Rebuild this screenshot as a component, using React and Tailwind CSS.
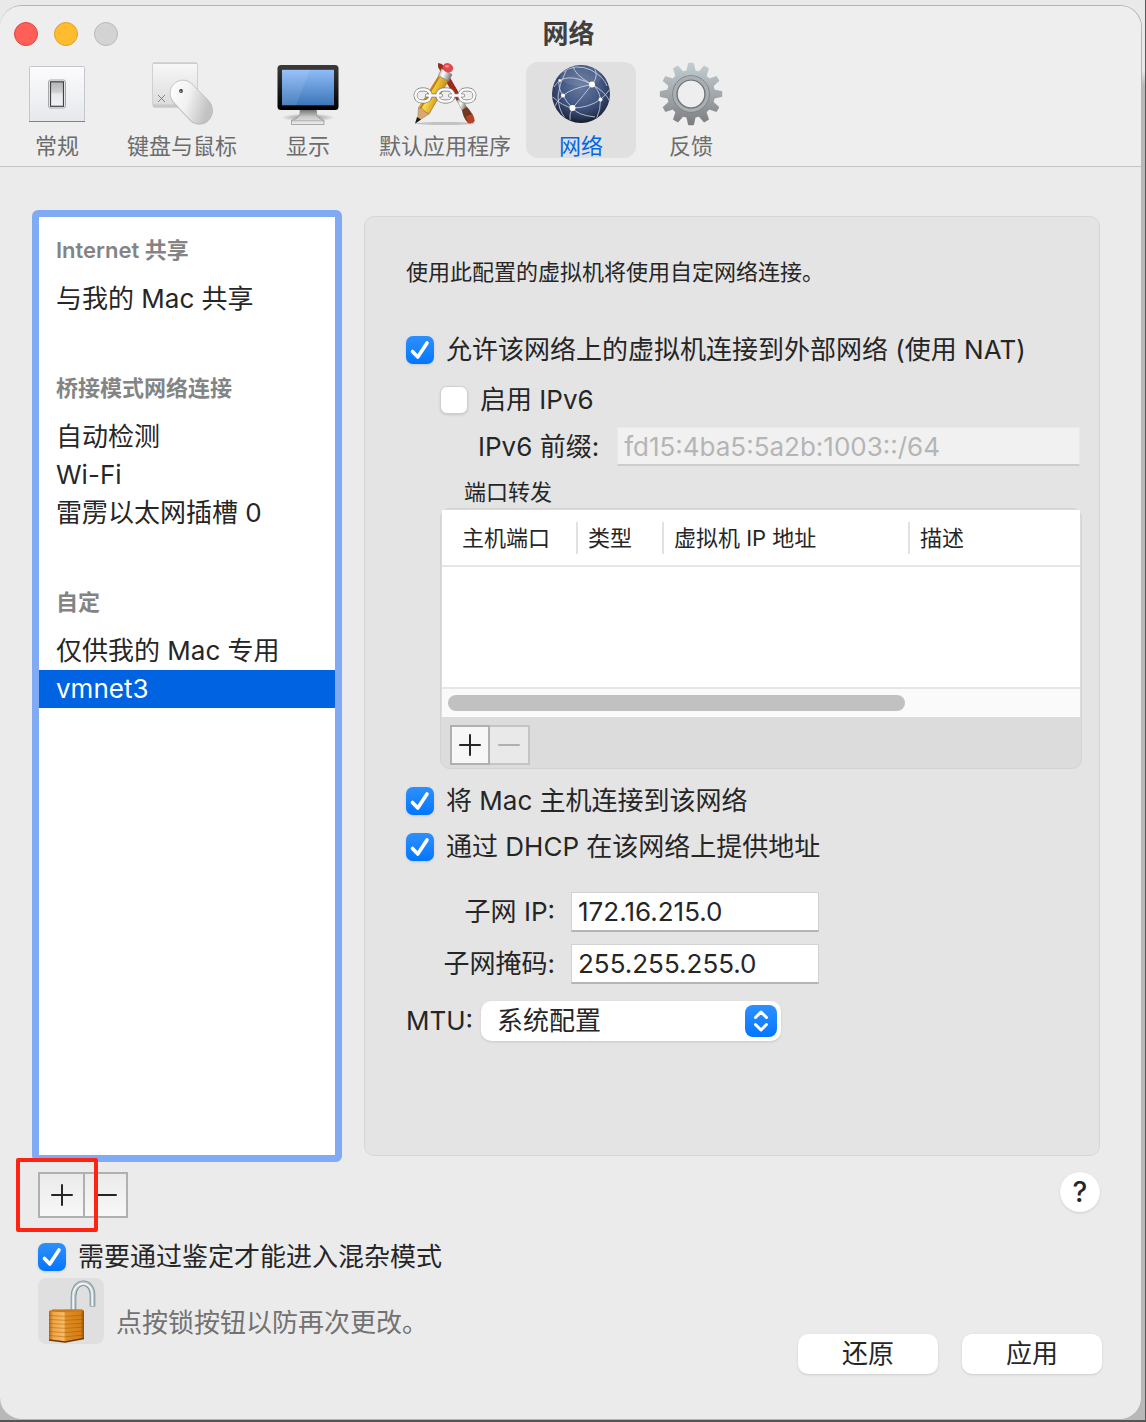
import React, { useState } from "react";

const general = (
  <svg viewBox="0 0 64 64" className="size-16" aria-hidden="true">
    <defs>
      <linearGradient id="plate" x1="0" y1="0" x2="0" y2="1">
        <stop offset="0" stopColor="#fcfcfd" />
        <stop offset="1" stopColor="#e6e8ec" />
      </linearGradient>
      <linearGradient id="rocker" x1="0" y1="0" x2="0" y2="1">
        <stop offset="0" stopColor="#b4b4b6" />
        <stop offset="0.42" stopColor="#cfcfd2" />
        <stop offset="0.5" stopColor="#e6e8ec" />
        <stop offset="1" stopColor="#f1f2f4" />
      </linearGradient>
    </defs>
    <rect x="4.500" y="4.500" width="55" height="55" rx="1" fill="url(#plate)" stroke="#c3c6cb" />
    <path d="M4 59.500h56" stroke="#7f8388" strokeWidth="1.200" />
    <rect x="23.500" y="18" width="17" height="28" rx="2" fill="#f7f7f8" stroke="#a5a7aa" />
    <rect x="25.500" y="19.800" width="13" height="24.500" fill="url(#rocker)" stroke="#3f4144" strokeWidth="1.200" />
  </svg>
);

const keyboardMouse = (
  <svg viewBox="0 0 64 64" className="size-16" aria-hidden="true">
    <defs>
      <linearGradient id="keycap" x1="0" y1="0" x2="0" y2="1">
        <stop offset="0" stopColor="#f8f8f8" />
        <stop offset="1" stopColor="#dcdcdc" />
      </linearGradient>
      <linearGradient id="mouse" x1="0" y1="0" x2="1" y2="0.300">
        <stop offset="0" stopColor="#ffffff" />
        <stop offset="0.500" stopColor="#f1f1f1" />
        <stop offset="1" stopColor="#c2c2c2" />
      </linearGradient>
    </defs>
    <rect x="2.500" y="0.800" width="45" height="45" rx="2" fill="#c9c9c9" />
    <rect x="2.500" y="0.800" width="45" height="42" rx="2" fill="url(#keycap)" stroke="#cbcbcb" strokeWidth="0.800" />
    <path d="M3 1.300h44" stroke="#bdbdbd" strokeWidth="0.800" />
    <path d="M8 33l7 7M15 33l-7 7" stroke="#777" strokeWidth="0.900" />
    <path d="M23.500 22.500C29 16.500 37 17 42 22L58 38C64 44 64 53 58 58.500C53 63 45 63 40 58L23.500 40C19 35 19 27 23.500 22.500Z" fill="#8e8e8e" opacity="0.350" transform="translate(0 1)" />
    <path d="M23.500 22.500C29 16.500 37 17 42 22L58 38C64 44 64 53 58 58.500C53 63 45 63 40 58L23.500 40C19 35 19 27 23.500 22.500Z" fill="url(#mouse)" stroke="#b5b5b5" strokeWidth="0.700" />
    <circle cx="31" cy="29" r="1.900" fill="#333" />
    <circle cx="30.800" cy="29.300" r="0.700" fill="#ddd" />
  </svg>
);

const display = (
  <svg viewBox="0 0 64 64" className="size-16" aria-hidden="true">
    <defs>
      <linearGradient id="screen" x1="0" y1="0" x2="0" y2="1">
        <stop offset="0" stopColor="#8fbcf8" />
        <stop offset="1" stopColor="#3c76b9" />
      </linearGradient>
      <linearGradient id="bezel" x1="0" y1="0" x2="0" y2="1">
        <stop offset="0" stopColor="#3a3a3a" />
        <stop offset="1" stopColor="#000" />
      </linearGradient>
      <linearGradient id="stand" x1="0" y1="0" x2="0" y2="1">
        <stop offset="0" stopColor="#6b6b6b" />
        <stop offset="0.500" stopColor="#c8c8c8" />
        <stop offset="1" stopColor="#ededed" />
      </linearGradient>
      <radialGradient id="standShade">
        <stop offset="0" stopColor="#000" stopOpacity="0.450" />
        <stop offset="1" stopColor="#000" stopOpacity="0" />
      </radialGradient>
    </defs>
    <ellipse cx="32" cy="55.500" rx="27" ry="4" fill="url(#standShade)" />
    <path d="M24 47H40.500V52Q41 56 48 58.500V62.500H15.500V58.500Q23 56 24 52Z" fill="url(#stand)" stroke="#8b8b8b" strokeWidth="0.700" />
    <path d="M15.500 58.700H48" stroke="#999" strokeWidth="0.600" />
    <rect x="1.500" y="3" width="61" height="45" rx="3.500" fill="url(#bezel)" />
    <rect x="6" y="7.800" width="52" height="35.500" fill="url(#screen)" />
    <path d="M6 7.800H34L20 43.300H6Z" fill="#fff" opacity="0.090" />
  </svg>
);

const defaultApps = (
  <svg viewBox="0 0 64 64" className="size-16" aria-hidden="true">
    <defs>
      <linearGradient id="pencil" x1="0" y1="0" x2="1" y2="0.500">
        <stop offset="0" stopColor="#f3b51c" />
        <stop offset="0.450" stopColor="#ffe04a" />
        <stop offset="1" stopColor="#b26a05" />
      </linearGradient>
      <linearGradient id="ferrule" x1="0" y1="0" x2="1" y2="0.400">
        <stop offset="0" stopColor="#999" />
        <stop offset="0.450" stopColor="#fff" />
        <stop offset="1" stopColor="#777" />
      </linearGradient>
    </defs>
    <ellipse cx="32" cy="61.500" rx="30" ry="1.500" fill="#000" opacity="0.180" />
    <path d="M25.500 1.500L29 2.500L49 37L44.500 39.500L25.500 5Z" fill="#a52a14" stroke="#701606" strokeWidth="0.700" />
    <path d="M44 38.500L48.500 36L54 45.500L49 48.500Z" fill="url(#ferrule)" stroke="#888" strokeWidth="0.500" />
    <path d="M49 48L54 45Q60 51 61.500 59Q60 62 55 61Q50 56 49 48Z" fill="#6f3a1b" />
    <path d="M53 54.500L59.500 52Q61.500 56 61.500 59Q60 62 55 61Z" fill="#b84227" />
    <path d="M26 13.500L35.500 18.500L16 52L5.500 46Z" fill="url(#pencil)" stroke="#976008" strokeWidth="0.600" />
    <path d="M26 15L7 47" stroke="#c97b08" strokeWidth="1.800" />
    <path d="M5.500 46L9.500 46.500L12 50L16 52L4.500 59.500Z" fill="#d7a970" stroke="#97734a" strokeWidth="0.500" />
    <path d="M4 55L8 57.500L2 61.800Z" fill="#1b1b1b" />
    <path d="M28.500 6.500L39 12.500L35.500 19.500L25.500 13.500Z" fill="url(#ferrule)" stroke="#777" strokeWidth="0.600" />
    <ellipse cx="35" cy="5.800" rx="5.300" ry="4.600" fill="#e24a51" transform="rotate(25 35 5.800)" />
    <ellipse cx="34" cy="4.300" rx="2.200" ry="1.400" fill="#f58a8e" />
    <g fill="none">
      <g stroke="#777" strokeWidth="3.800">
        <rect x="2.500" y="27.500" width="15" height="12" rx="6" />
        <rect x="24.500" y="27.500" width="16" height="12" rx="6" />
        <rect x="46.500" y="27.500" width="15" height="12" rx="6" />
        <path d="M14 33.500H28M37 33.500H50" strokeLinecap="round" />
      </g>
      <g stroke="#fafafa" strokeWidth="2.500">
        <rect x="2.500" y="27.500" width="15" height="12" rx="6" />
        <rect x="24.500" y="27.500" width="16" height="12" rx="6" />
        <rect x="46.500" y="27.500" width="15" height="12" rx="6" />
        <path d="M14 33.500H28M37 33.500H50" strokeLinecap="round" />
      </g>
    </g>
  </svg>
);

const network = (
  <svg viewBox="0 0 64 64" className="size-16" aria-hidden="true">
    <defs>
      <radialGradient id="globe" cx="0.500" cy="0.380" r="0.640">
        <stop offset="0" stopColor="#66799f" />
        <stop offset="0.550" stopColor="#435682" />
        <stop offset="0.850" stopColor="#263250" />
        <stop offset="1" stopColor="#0e1322" />
      </radialGradient>
      <clipPath id="globeClip">
        <circle cx="32" cy="32" r="28.500" />
      </clipPath>
    </defs>
    <circle cx="32" cy="32" r="29" fill="url(#globe)" />
    <g clipPath="url(#globeClip)" fill="none" stroke="#d8e0ee" strokeWidth="0.900" opacity="0.850">
      <path d="M24 3Q24 12 43 22.500Q57 30 61 40" />
      <path d="M5 25Q15 8 43 22.500" />
      <path d="M14 10Q26 1 42 8Q55 15 58 24" />
      <path d="M43 22.500Q51 13 44 4" />
      <path d="M43 22.500Q23 26 14 33.500Q7 40 5 46" />
      <path d="M43 22.500Q35 33 23.500 46" />
      <path d="M43 22.500Q50 27 51.500 37.500Q52 47 47 58" />
      <path d="M51.500 37.500Q39 46 23.500 46Q13 44 4 35" />
      <path d="M10 17Q9 27 14 33.500Q18 41 23.500 46" />
      <path d="M17 9Q10 22 9 34Q9 47 16 56" />
      <path d="M23.500 46Q28 53 46 55" />
      <path d="M23.500 46Q20 52 21 59" />
      <path d="M51.500 37.500Q57 33 61 27" />
    </g>
    <g fill="#fff">
      <circle cx="43" cy="22.500" r="3" />
      <circle cx="23.500" cy="46" r="3" />
      <circle cx="14" cy="33.500" r="2" />
      <circle cx="51.500" cy="37.500" r="2" />
      <circle cx="11" cy="18.500" r="1.200" />
    </g>
    <ellipse cx="32" cy="14" rx="21" ry="10" fill="#fff" opacity="0.090" />
  </svg>
);

const teeth = Array.from({ length: 12 }, (_, i) => i * 30);

const feedback = (
  <svg viewBox="0 0 64 64" className="size-16" aria-hidden="true">
    <defs>
      <linearGradient id="gear" gradientUnits="userSpaceOnUse" x1="0" y1="0" x2="0" y2="64">
        <stop offset="0" stopColor="#c3cfd4" />
        <stop offset="0.500" stopColor="#a2a8ab" />
        <stop offset="1" stopColor="#7b7b7d" />
      </linearGradient>
      <mask id="gearMask">
        <path d="M0 0H64V64H0Z" fill="#000" />
        <circle cx="32" cy="32" r="24" fill="#fff" />
        {teeth.map((a) => (
          <path key={a} d="M27 11L29 1.500Q29.200 0.800 30 0.800H34Q34.800 0.800 35 1.500L37 11Z" fill="#fff" transform={"rotate(" + a + " 32 32)"} />
        ))}
        <circle cx="32" cy="32" r="13.200" fill="#000" />
      </mask>
    </defs>
    <g mask="url(#gearMask)">
      <rect width="64" height="64" fill="url(#gear)" />
      <circle cx="32" cy="32" r="18.300" fill="none" stroke="#7d8184" strokeWidth="1" />
      <circle cx="32" cy="32" r="16.300" fill="none" stroke="#a9afb2" strokeWidth="3" />
      <circle cx="32" cy="32" r="13.900" fill="none" stroke="#737678" strokeWidth="1.400" />
    </g>
  </svg>
);

const padlock = (
  <svg viewBox="0 0 66 66" className="size-full" aria-hidden="true">
    <defs>
      <linearGradient id="brass" x1="0" y1="0" x2="1" y2="0">
        <stop offset="0" stopColor="#b5680f" />
        <stop offset="0.120" stopColor="#f0a545" />
        <stop offset="0.420" stopColor="#f8bb62" />
        <stop offset="0.480" stopColor="#e08d22" />
        <stop offset="0.900" stopColor="#d67f16" />
        <stop offset="1" stopColor="#8f4d08" />
      </linearGradient>
    </defs>
    <path d="M35.500 34V19C35.500 1 54.500 1 54.500 17V28.500" fill="none" stroke="#7c8990" strokeWidth="5.600" />
    <path d="M35.500 34V19C35.500 1 54.500 1 54.500 17V28" fill="none" stroke="#b7c4ca" strokeWidth="4" />
    <path d="M35.200 34V19C35.200 1.500 54.200 1.500 54.200 17V28" fill="none" stroke="#f0f6f8" strokeWidth="1.700" />
    <path d="M11 33L15 31.500H44L46 33V60.500L27 64L11 62Z" fill="url(#brass)" />
    <path d="M11 33.500L27 34.200L46 33L44 31.500H15Z" fill="#c87a1c" />
    <path d="M11 37.500L27 38.300L46 37.300M11 41.500L27 42.300L46 41.300M11 45.500L27 46.300L46 45.300M11 49.500L27 50.300L46 49M11 53.500L27 54.500L46 53M11 57.500L27 58.800L46 57" fill="none" stroke="#8f4d08" strokeWidth="0.900" opacity="0.450" />
    <path d="M11 62L27 64L46 60.500" fill="none" stroke="#6d3a06" strokeWidth="1.400" />
  </svg>
);

const tabs = [
  { name: "常规", icon: general, box: "w-[110px]" },
  { name: "键盘与鼠标", icon: keyboardMouse, box: "w-[140px]" },
  { name: "显示", icon: display, box: "w-[112px]" },
  { name: "默认应用程序", icon: defaultApps, box: "w-[162px]" },
  { name: "网络", icon: network, box: "w-[110px]" },
  { name: "反馈", icon: feedback, box: "w-[110px]" },
];

const groups = [
  { title: "Internet 共享", items: ["与我的 Mac 共享"] },
  { title: "桥接模式网络连接", items: ["自动检测", "Wi-Fi", "雷雳以太网插槽 0"] },
  { title: "自定", items: ["仅供我的 Mac 专用", "vmnet3"] },
];

function Check({ label, defaultChecked }) {
  return (
    <label className="flex items-center gap-3">
      <span className="grid size-7 shrink-0">
        <input
          type="checkbox"
          defaultChecked={defaultChecked}
          className="peer col-start-1 row-start-1 size-7 appearance-none rounded-[7px] border border-[#cfcfcf] bg-white shadow-sm checked:border-0 checked:bg-linear-to-b checked:from-[#2b90ff] checked:to-[#0076ff]"
        />
        <svg viewBox="0 0 28 28" className="pointer-events-none col-start-1 row-start-1 hidden size-7 peer-checked:block" aria-hidden="true">
          <path d="M6.500 15.500L11.800 21L21 7" fill="none" stroke="#fff" strokeWidth="3.600" strokeLinecap="round" strokeLinejoin="round" />
        </svg>
      </span>
      <span>{label}</span>
    </label>
  );
}

function Sign({ plus }) {
  return (
    <svg viewBox="0 0 22 22" className="size-[22px]" aria-hidden="true">
      <path d={plus ? "M1 11H21M11 1V21" : "M1 11H21"} stroke="currentColor" strokeWidth="2" strokeLinecap="round" />
    </svg>
  );
}

export default function App() {
  const [selected, setSelected] = useState("vmnet3");

  return (
    <div className="flex min-h-screen flex-col border-r border-b-2 border-[#555] bg-linear-to-b from-[#e9e9e9] from-5% to-[#b8b8b8] to-6% pt-[5px] pr-[3px] font-['Inter','Noto_Sans_CJK_SC',sans-serif] text-[26px] leading-[38px] text-[#262626]">
      <div className="flex flex-1 flex-col overflow-hidden rounded-[22px] border border-l-0 border-[#b4b4b4] bg-[#ebebeb]">
        <header className="border-b border-[#c4c4c4] bg-[#eeeeee]">
          <div className="grid h-14 grid-cols-[1fr_auto_1fr] items-center pr-[18px] pl-3.5">
            <div className="flex gap-4">
              <button aria-label="关闭" className="size-6 rounded-full border border-[#e2463f] bg-[#ff5f57]" />
              <button aria-label="最小化" className="size-6 rounded-full border border-[#e0a028] bg-[#febc2e]" />
              <button aria-label="缩放" disabled className="size-6 rounded-full border border-[#b9b9b9] bg-[#d3d3d3]" />
            </div>
            <h1 className="font-bold text-[#404040]">网络</h1>
          </div>
          <nav className="flex h-26 pl-0.5 text-[22px] leading-6 text-[#6c6c6c]">
            {tabs.map((t) => (
              <button
                key={t.name}
                aria-current={t.name === "网络" ? "page" : undefined}
                className={
                  "flex h-24 shrink-0 flex-col items-center justify-between whitespace-nowrap rounded-xl " +
                  t.box +
                  (t.name === "网络" ? " bg-[#e0e0e0] text-[#0068e6]" : "")
                }
              >
                {t.icon}
                <span>{t.name}</span>
              </button>
            ))}
          </nav>
        </header>

        <main className="flex flex-1 flex-col pt-[43px] pr-[38px] pb-[45px] pl-8">
          <div className="flex flex-1 gap-[22px]">
            <aside className="w-[310px] shrink-0 rounded-md border-[7px] border-[#80abf4] bg-white">
              {groups.map((g, i) => (
                <section key={g.title} className={i === 0 ? "pt-[17px]" : "pt-[54px]"}>
                  <h2 className="px-[17px] pb-3.5 text-[22px] leading-8 font-semibold text-[#848484]">{g.title}</h2>
                  {g.items.map((item) => (
                    <button
                      key={item}
                      onClick={() => setSelected(item)}
                      className={
                        "block w-full px-[17px] text-left " + (item === selected ? "bg-[#0063e1] text-white" : "")
                      }
                    >
                      {item}
                    </button>
                  ))}
                </section>
              ))}
            </aside>

            <section className="my-1.5 mr-[3px] flex-1 rounded-[10px] border border-[#d6d6d6] bg-[#e4e4e4] pt-[39px] pr-[17px] pb-10 pl-[41px]">
              <p className="text-[22px] leading-8">使用此配置的虚拟机将使用自定网络连接。</p>
              <div className="pt-[43px]">
                <Check label="允许该网络上的虚拟机连接到外部网络 (使用 NAT)" defaultChecked />
              </div>
              <div className="pt-3 pl-[34px]">
                <Check label="启用 IPv6" />
                <div className="flex items-center gap-[18px] pt-2 pr-0.5 pl-[38px]">
                  <label htmlFor="prefix" className="shrink-0">IPv6 前缀:</label>
                  <input
                    id="prefix"
                    disabled
                    defaultValue="fd15:4ba5:5a2b:1003::/64"
                    className="h-[39px] min-w-0 flex-1 border border-b-2 border-[#e9e9e9] border-b-[#cdcdcd] bg-[#f1f1f1] px-1.5 text-[#b5b5b5]"
                  />
                </div>
                <h3 className="pt-2.5 pl-6 text-[22px] leading-8">端口转发</h3>
                <div className="rounded-[10px] border border-[#d2d2d2] bg-[#dcdcdc] px-px pt-px">
                  <div className="bg-white">
                    <table className="w-full border-b-2 border-[#e6e6e6] text-left text-[22px] leading-8">
                      <thead>
                        <tr className="h-14">
                          <th className="w-[134px] pl-5 font-normal">主机端口</th>
                          <th className="w-[86px] font-normal"><span className="block border-l-2 border-[#e2e2e2] pl-2.5">类型</span></th>
                          <th className="w-[246px] font-normal"><span className="block border-l-2 border-[#e2e2e2] pl-2.5">虚拟机 IP 地址</span></th>
                          <th className="font-normal"><span className="block border-l-2 border-[#e2e2e2] pl-2.5">描述</span></th>
                        </tr>
                      </thead>
                    </table>
                    <div className="h-[120px]" />
                    <div className="h-[30px] border-t-2 border-[#e6e6e6] bg-[#fafafa] px-1.5 py-1.5">
                      <div className="h-4 w-[73%] rounded-full bg-[#c1c1c1]" />
                    </div>
                  </div>
                  <div className="flex px-2 pt-2 pb-[3px]">
                    <button aria-label="添加端口转发" className="flex size-10 items-center justify-center border-2 border-[#b0b0b0] bg-[#f7f7f7]"><Sign plus /></button>
                    <button aria-label="移除端口转发" disabled className="flex size-10 items-center justify-center border-2 border-l-0 border-[#c4c4c4] bg-[#e9e9e9] text-[#b0b0b0]"><Sign /></button>
                  </div>
                </div>
              </div>
              <div className="flex flex-col gap-2 pt-[13px]">
                <Check label="将 Mac 主机连接到该网络" defaultChecked />
                <Check label="通过 DHCP 在该网络上提供地址" defaultChecked />
              </div>
              <div className="grid w-fit grid-cols-[149px_248px] items-center gap-x-4 gap-y-3 pt-[26px]">
                <label htmlFor="subnet" className="text-right">子网 IP:</label>
                <input id="subnet" defaultValue="172.16.215.0" className="h-10 min-w-0 border border-b-2 border-[#d2d2d2] border-b-[#b4b4b4] bg-white px-1.5" />
                <label htmlFor="mask" className="text-right">子网掩码:</label>
                <input id="mask" defaultValue="255.255.255.0" className="h-10 min-w-0 border border-b-2 border-[#d2d2d2] border-b-[#b4b4b4] bg-white px-1.5" />
              </div>
              <div className="flex items-center gap-2 pt-[17px]">
                <label htmlFor="mtu">MTU:</label>
                <div className="grid w-[300px]">
                  <select id="mtu" className="col-start-1 row-start-1 h-10 appearance-none rounded-[10px] bg-white pl-4 shadow">
                    <option>系统配置</option>
                  </select>
                  <svg viewBox="0 0 32 32" className="pointer-events-none col-start-1 row-start-1 mr-1 size-8 self-center justify-self-end rounded-lg bg-linear-to-b from-[#2b90ff] to-[#0076ff]" aria-hidden="true">
                    <path d="M10.500 12.500L16 7L21.500 12.500M10.500 19.500L16 25L21.500 19.500" fill="none" stroke="#fff" strokeWidth="3" strokeLinecap="round" strokeLinejoin="round" />
                  </svg>
                </div>
              </div>
            </section>
          </div>

          <div className="flex items-start justify-between pt-2.5 pr-[3px] pl-1.5">
            <div className="relative flex">
              <button aria-label="添加网络" className="flex h-[46px] w-[47px] items-center justify-center border-2 border-[#b0b0b0] bg-linear-to-b from-[#ebebeb] to-[#f7f7f7]"><Sign plus /></button>
              <button aria-label="移除网络" className="flex h-[46px] w-[43px] items-center justify-center border-2 border-l-0 border-[#b0b0b0] bg-linear-to-b from-[#ebebeb] to-[#f7f7f7]"><Sign /></button>
              <div className="pointer-events-none absolute -top-3.5 -left-[22px] h-[74px] w-[82px] rounded-xs border-4 border-[#ff2314]" />
            </div>
            <button aria-label="帮助" className="size-10 rounded-full bg-white text-[28px] leading-10 font-medium shadow">?</button>
          </div>
          <div className="pt-5 pl-1.5">
            <Check label="需要通过鉴定才能进入混杂模式" defaultChecked />
          </div>
          <div className="flex justify-between pr-px pl-1.5">
            <div className="flex gap-3 pt-0.5">
              <button aria-label="锁" className="size-[66px] rounded-lg bg-[#dfdfdf]">{padlock}</button>
              <p className="pt-[26px] text-[#727272]">点按锁按钮以防再次更改。</p>
            </div>
            <div className="flex gap-6 pt-[58px]">
              <button className="h-10 w-[140px] rounded-[10px] bg-white shadow">还原</button>
              <button className="h-10 w-[140px] rounded-[10px] bg-white shadow">应用</button>
            </div>
          </div>
        </main>
      </div>
    </div>
  );
}
